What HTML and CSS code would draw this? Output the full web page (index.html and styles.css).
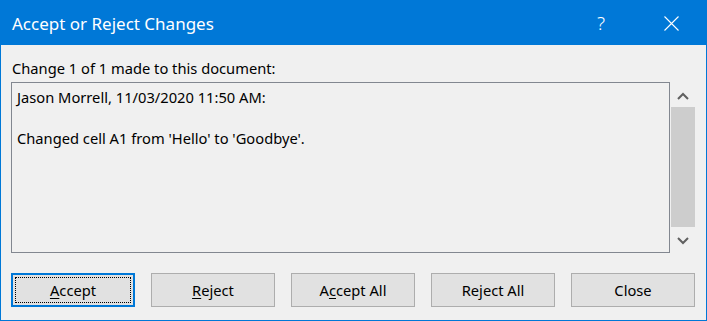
FILE: index.html
```html
<!DOCTYPE html>
<html lang="en">
<head>
<meta charset="UTF-8">
<title>Accept or Reject Changes</title>
<link rel="stylesheet" href="styles.css">
</head>
<body>
<div class="dialog">
  <div class="titlebar">
    <span class="title">Accept or Reject Changes</span>
    <span class="caption-btn help">?</span>
    <span class="caption-btn close">
      <svg width="15" height="15" viewBox="0 0 15 15"><path d="M0.5 0.5 L14.5 14.5 M14.5 0.5 L0.5 14.5" stroke="#fff" stroke-width="1.1" fill="none"/></svg>
    </span>
  </div>
  <div class="content">
    <p class="caption">Change 1 of 1 made to this document:</p>
    <div class="changes">
      <div class="changes-text">
        <p>Jason Morrell, 11/03/2020 11:50 AM:</p>
        <p>&nbsp;</p>
        <p>Changed cell A1 from 'Hello' to 'Goodbye'.</p>
      </div>
      <div class="scrollbar">
        <div class="arrow arrow-up">
          <svg width="12" height="8" viewBox="0 0 12 8"><path d="M1 7 L6 2 L11 7" stroke="#606060" stroke-width="2" fill="none"/></svg>
        </div>
        <div class="thumb"></div>
        <div class="arrow arrow-down">
          <svg width="12" height="8" viewBox="0 0 12 8"><path d="M1 1 L6 6 L11 1" stroke="#606060" stroke-width="2" fill="none"/></svg>
        </div>
      </div>
    </div>
    <div class="buttons">
      <button class="btn default"><u>A</u>ccept</button>
      <button class="btn"><u>R</u>eject</button>
      <button class="btn">A<u>c</u>cept All</button>
      <button class="btn">Reject All</button>
      <button class="btn">Close</button>
    </div>
  </div>
</div>
</body>
</html>
```

FILE: styles.css
```css
* {
  margin: 0;
  padding: 0;
  box-sizing: border-box;
}
body {
  font-family: "Noto Sans", "Open Sans", sans-serif;
  font-size: 14.7px;
  color: #000;
  background: #f0f0f0;
}
.dialog {
  width: 707px;
  height: 321px;
  border: 1px solid #0078d7;
  background: #f0f0f0;
  display: flex;
  flex-direction: column;
}
.titlebar {
  height: 44px;
  background: #0078d7;
  color: #fff;
  display: flex;
  align-items: center;
  padding-left: 11px;
}
.title {
  font-size: 17px;
  flex: 1;
}
.caption-btn {
  width: 70px;
  height: 44px;
  display: flex;
  align-items: center;
  justify-content: center;
}
.help {
  font-size: 19px;
  font-weight: 300;
}
.close svg {
  display: block;
}
.content {
  padding: 13px 11px 13px 10px;
}
.caption {
  line-height: 20px;
  padding-left: 1px;
  margin-bottom: 4px;
}
.changes {
  display: flex;
  height: 171px;
}
.changes-text {
  width: 659px;
  border: 1px solid #828790;
  padding: 4px 5px;
  line-height: 20.5px;
}
.scrollbar {
  width: 24px;
  margin-left: 1px;
  display: flex;
  flex-direction: column;
}
.arrow {
  display: flex;
  justify-content: center;
  align-items: center;
}
.arrow-up {
  height: 25px;
  padding-top: 3px;
}
.arrow-down {
  flex: 1;
  padding-top: 1px;
}
.arrow svg {
  display: block;
}
.thumb {
  height: 120px;
  background: #cdcdcd;
}
.buttons {
  display: flex;
  gap: 16px;
  margin-top: 20px;
}
.btn {
  width: 124px;
  height: 34px;
  font-family: inherit;
  font-size: 14.7px;
  color: #000;
  background: #e1e1e1;
  border: 1px solid #adadad;
}
.btn u {
  text-underline-offset: 2px;
}
.btn.default {
  border: 2px solid #0078d7;
  outline: 1px dotted #000;
  outline-offset: -5px;
}
```
